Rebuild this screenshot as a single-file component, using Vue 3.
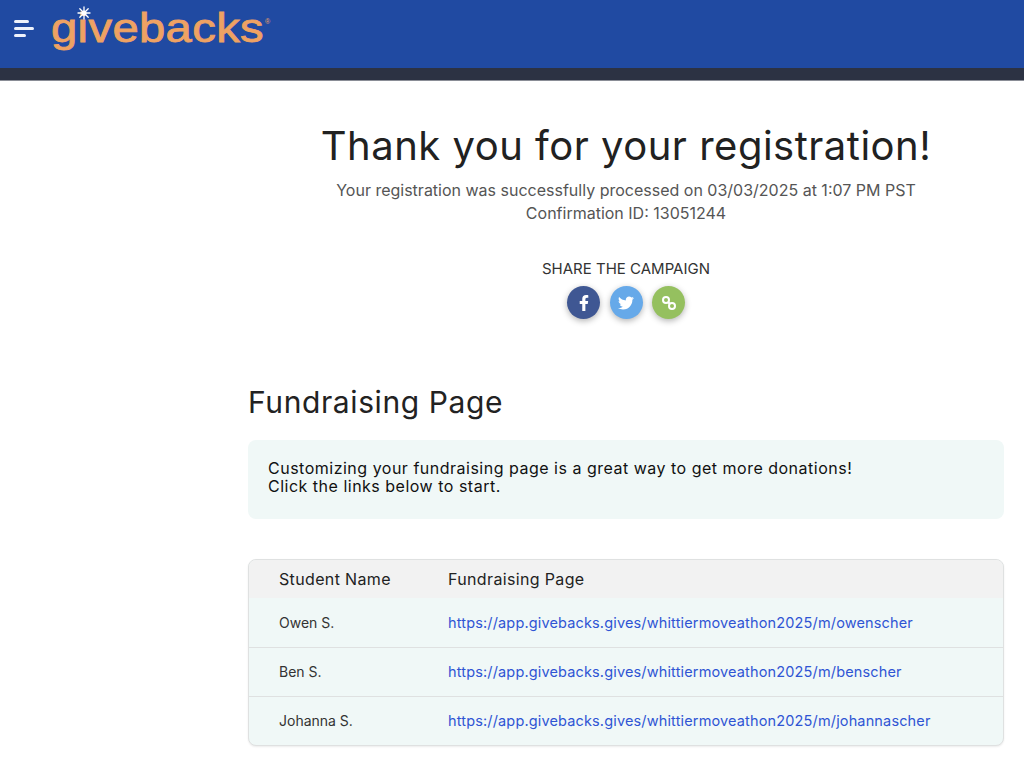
<script setup>
const students = [
  { name: 'Owen S.', url: 'https://app.givebacks.gives/whittiermoveathon2025/m/owenscher' },
  { name: 'Ben S.', url: 'https://app.givebacks.gives/whittiermoveathon2025/m/benscher' },
  { name: 'Johanna S.', url: 'https://app.givebacks.gives/whittiermoveathon2025/m/johannascher' },
]
</script>

<template>
  <div class="page">
    <header class="topbar">
      <button class="menu-btn" type="button" aria-label="Menu">
        <span class="line short" />
        <span class="line" />
        <span class="line mid" />
      </button>
      <div class="logo">
        <span class="logo-word">givebacks</span>
        <span class="logo-reg">®</span>
        <svg class="logo-star" viewBox="0 0 14 14" width="14" height="14">
          <g stroke="#fff" stroke-width="1.3" stroke-linecap="round">
            <path d="M7 1v12M1 7h12M2.8 2.8l8.4 8.4M11.2 2.8l-8.4 8.4" />
          </g>
          <circle cx="7" cy="7" r="2.6" fill="#fff" />
        </svg>
      </div>
    </header>
    <div class="subbar" />

    <main class="content">
      <section class="thanks">
        <h1>Thank you for your registration!</h1>
        <p>Your registration was successfully processed on 03/03/2025 at 1:07 PM PST</p>
        <p>Confirmation ID: 13051244</p>
        <div class="share-label">SHARE THE CAMPAIGN</div>
        <div class="share-btns">
          <a class="share fb" href="#" aria-label="Facebook">
            <svg viewBox="0 0 320 512" width="10" height="16">
              <path fill="#fff" d="M279 288l14-93h-89v-60c0-25 12-50 52-50h41V6s-37-6-72-6c-73 0-121 44-121 125v70H23v93h81v224h100V288z" />
            </svg>
          </a>
          <a class="share tw" href="#" aria-label="Twitter">
            <svg viewBox="0 0 512 512" width="16" height="16">
              <path fill="#fff" d="M459 152c.3 4.500.3 9.100.3 13.600 0 138.700-105.600 298.500-298.600 298.500-59.500 0-114.700-17.200-161.100-47.100 8.400 1 16.600 1.300 25.300 1.300 49.100 0 94.200-16.600 130.300-44.800-46.100-1-84.800-31.200-98.100-72.800 6.500 1 13 1.600 19.800 1.600 9.400 0 18.800-1.300 27.600-3.600-48.100-9.700-84.100-52-84.100-103v-1.300c14 7.800 30.200 12.700 47.400 13.300-28.300-18.800-46.800-51-46.800-87.400 0-19.500 5.200-37.400 14.300-53 51.700 63.700 129.300 105.300 216.400 109.800-1.600-7.800-2.600-15.900-2.600-24 0-57.800 46.800-104.900 104.900-104.900 30.200 0 57.500 12.700 76.700 33.100 23.700-4.500 46.500-13.300 66.600-25.300-7.800 24.400-24.400 44.800-46.100 57.800 21.100-2.300 41.600-8.100 60.400-16.200-14.300 20.800-32.200 39.300-52.600 54.300z" />
            </svg>
          </a>
          <a class="share link" href="#" aria-label="Copy link">
            <svg viewBox="0 0 16 16" width="16" height="16" fill="none" stroke="#fff" stroke-width="2">
              <circle cx="5" cy="5" r="3" />
              <circle cx="11" cy="11" r="3" />
              <path d="M7 7l2 2" />
            </svg>
          </a>
        </div>
      </section>

      <h2>Fundraising Page</h2>
      <div class="notice">
        Customizing your fundraising page is a great way to get more donations!<br />
        Click the links below to start.
      </div>

      <div class="table-card">
        <div class="row head">
          <div class="col-name">Student Name</div>
          <div>Fundraising Page</div>
        </div>
        <div v-for="s in students" :key="s.name" class="row">
          <div class="col-name">{{ s.name }}</div>
          <a class="url" :href="s.url">{{ s.url }}</a>
        </div>
      </div>
    </main>
  </div>
</template>

<style scoped>
.page {
  height: 773px;
  overflow: hidden;
  background: #fff;
  font-family: Inter, 'Open Sans', sans-serif;
  color: #222;
}

.topbar {
  height: 68px;
  background: #204aa2;
  display: flex;
  align-items: flex-start;
}

.menu-btn {
  margin: 20px 0 0 14px;
  padding: 0;
  width: 20px;
  background: none;
  border: none;
  display: flex;
  flex-direction: column;
  gap: 4.500px;
}

.line {
  display: block;
  height: 2.500px;
  width: 20px;
  border-radius: 2px;
  background: #eef2fb;
}

.line.short { width: 15px; }
.line.mid { width: 12px; }

.logo {
  position: relative;
  margin: 0 0 0 17px;
  display: flex;
  align-items: flex-start;
}

.logo-word {
  display: inline-block;
  font-family: 'Liberation Sans', Arial, sans-serif;
  font-size: 40px;
  line-height: 56px;
  letter-spacing: 0.3px;
  color: #eea263;
  -webkit-text-stroke: 0.8px #eea263;
  transform: scaleX(1.18);
  transform-origin: left center;
}

.logo-reg {
  position: absolute;
  left: 214px;
  top: 18px;
  font-family: 'Liberation Sans', Arial, sans-serif;
  font-size: 7px;
  line-height: 8px;
  color: #eea263;
}

.logo-star {
  position: absolute;
  left: 26px;
  top: 6px;
}

.subbar {
  height: 13px;
  background: #2c3243;
  border-bottom: 1px solid #8a8d96;
  box-sizing: border-box;
}

.content {
  margin-left: 248px;
  width: 756px;
}

.thanks {
  text-align: center;
  padding-top: 41px;
}

h1 {
  margin: 0 0 9px;
  font-size: 40px;
  line-height: 48px;
  font-weight: 400;
  letter-spacing: 0.5px;
  color: #212121;
}

.thanks p {
  margin: 0;
  font-size: 16px;
  line-height: 22.500px;
  color: #555;
}

.share-label {
  margin-top: 34px;
  font-size: 15px;
  line-height: 22px;
  color: #333;
}

.share-btns {
  margin-top: 6px;
  display: flex;
  justify-content: center;
  gap: 9.500px;
}

.share {
  width: 33px;
  height: 33px;
  border-radius: 50%;
  display: flex;
  align-items: center;
  justify-content: center;
  box-shadow: 0 2px 6px rgba(0, 0, 0, 0.3);
}

.fb { background: #3f5793; }
.tw { background: #66a9e9; }
.link { background: #95c05f; }

h2 {
  margin: 64px 0 0;
  font-size: 30px;
  line-height: 38px;
  font-weight: 400;
  letter-spacing: 0.6px;
  color: #222;
}

.notice {
  margin-top: 19px;
  padding: 19px 20px;
  height: 79px;
  box-sizing: border-box;
  border-radius: 8px;
  background: #f0f8f7;
  font-size: 16px;
  line-height: 18px;
  letter-spacing: 0.5px;
  color: #111;
}

.table-card {
  margin-top: 40px;
  border: 1px solid #dfe1e1;
  border-radius: 8px;
  overflow: hidden;
  background: #f0f8f7;
  box-shadow: 0 1px 2px rgba(0, 0, 0, 0.08);
}

.row {
  display: flex;
  align-items: center;
  height: 49px;
  padding: 0 0 1px 30px;
  font-size: 14px;
  color: #333;
  box-sizing: border-box;
}

.row + .row + .row {
  border-top: 1px solid #dfe1e1;
}

.row.head {
  height: 38px;
  padding-bottom: 0;
  background: #f2f2f2;
  font-size: 16px;
  letter-spacing: 0.35px;
  color: #222;
}

.col-name {
  width: 169px;
}

.url {
  color: #2f55d4;
  text-decoration: none;
  font-size: 14.500px;
  letter-spacing: 0.15px;
}
</style>
